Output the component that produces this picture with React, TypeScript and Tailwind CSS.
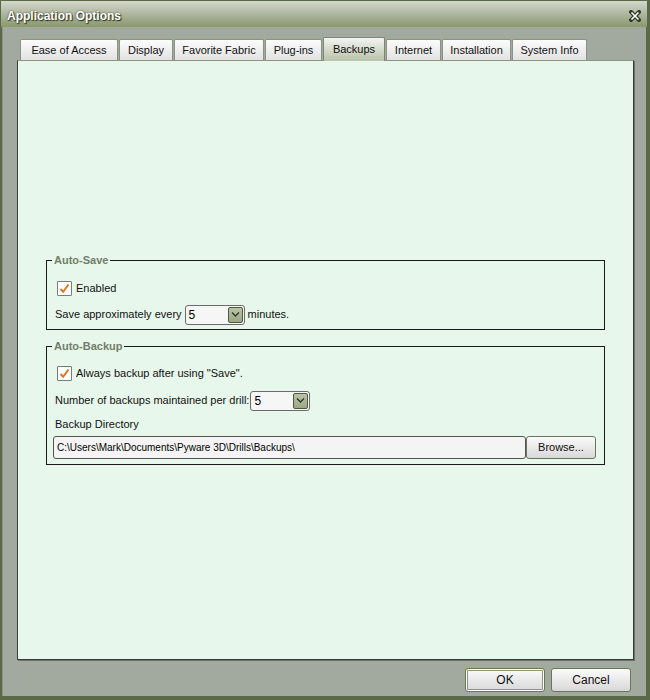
import React from "react";

const font = { fontFamily: '"Liberation Sans", Arial, sans-serif' };

function Tab({ label, w, selected }: { label: string; w: number; selected?: boolean }) {
  if (selected) {
    return (
      <div
        className="h-[24px] -mb-[1px] flex items-start justify-center pt-[3px] border border-b-0 border-[#7d8673] rounded-t-[2px] bg-gradient-to-b from-[#f4f4f2] to-[#b8c2a8] text-[11px] text-[#111] z-10"
        style={{ width: w }}
      >
        {label}
      </div>
    );
  }
  return (
    <div
      className="h-[21px] flex items-center justify-center border border-b-0 border-[#8a9282] rounded-t-[2px] bg-gradient-to-b from-[#fcfcfc] to-[#e2e2e2] text-[11px] text-[#111]"
      style={{ width: w }}
    >
      {label}
    </div>
  );
}

function Check() {
  return (
    <div className="w-[15px] h-[15px] border border-[#7a7a7a] bg-white rounded-[1px] flex items-center justify-center">
      <svg width="11" height="11" viewBox="0 0 11 11">
        <path d="M1.5 6 L4.2 8.8 L9.5 1.5" fill="none" stroke="#e2741c" strokeWidth="2" />
      </svg>
    </div>
  );
}

function Drop({ value }: { value: string }) {
  return (
    <div className="w-[60px] h-[20px] border border-[#6b6b6b] rounded-[3px] bg-[#f6f6f6] flex items-center justify-between pl-[3px] pr-[1px]">
      <span className="text-[12px] text-black">{value}</span>
      <div className="w-[15px] h-[16px] border border-[#4d5a3e] rounded-[2px] bg-gradient-to-b from-[#b9c3a6] to-[#9ba888] flex items-center justify-center">
        <svg width="9" height="7" viewBox="0 0 9 7">
          <path d="M1 1.5 L4.5 5 L8 1.5" fill="none" stroke="#2e3a24" strokeWidth="1.4" />
        </svg>
      </div>
    </div>
  );
}

function Button({ label, def }: { label: string; def?: boolean }) {
  return (
    <div
      className={
        "w-[80px] h-[24px] rounded-[3px] border border-[#6a7658] flex items-center justify-center text-[12px] text-[#111] bg-gradient-to-b from-[#fbfbfb] to-[#d8d8d8] " +
        (def ? "shadow-[inset_0_0_0_1px_#ffffff,inset_0_0_0_2px_#8c967e]" : "")
      }
    >
      {label}
    </div>
  );
}

function Group({ title, children, h }: { title: string; children: React.ReactNode; h: number }) {
  return (
    <div className="relative border border-[#1a1a1a]" style={{ height: h }}>
      <span className="absolute -top-[8px] left-[5px] px-[2px] bg-[#e8f7eb] text-[11px] font-bold text-[#727d68] leading-[14px]">
        {title}
      </span>
      {children}
    </div>
  );
}

export default function App() {
  return (
    <div style={font} className="w-[650px] h-[700px] bg-[#5a6a48] flex flex-col pl-[2px] pr-[4px] pb-[4px] pt-[1px]">
      {/* Title bar */}
      <div className="h-[26px] flex items-center justify-between bg-gradient-to-b from-[#d4d8cd] via-[#aeb69f] to-[#8a986c] pl-[6px] pr-[6px] -ml-[1px] -mr-[1px]">
        <span className="text-[12px] font-bold text-white pt-[3px] [text-shadow:1px_1px_1px_#2b3320,0_0_2px_#3a4430]">
          Application Options
        </span>
        <svg width="12" height="12" viewBox="0 0 12 12" className="mt-[3px]">
          <path d="M2 2 L10 10 M10 2 L2 10" stroke="#2f3a28" strokeWidth="4" strokeLinecap="square" />
          <path d="M2.5 2.5 L9.5 9.5 M9.5 2.5 L2.5 9.5" stroke="#ffffff" strokeWidth="1.6" />
        </svg>
      </div>
      {/* Body */}
      <div className="flex-1 bg-[#a2aa9f] flex flex-col pl-[14px] pr-[10px] pt-[12px] border-l border-[#8a9583]">
        <div className="flex items-end pl-[3px] gap-[1px] h-[21px]">
          <Tab label="Ease of Access" w={98} />
          <Tab label="Display" w={54} />
          <Tab label="Favorite Fabric" w={90} />
          <Tab label="Plug-ins" w={57} />
          <Tab label="Backups" w={62} selected />
          <Tab label="Internet" w={55} />
          <Tab label="Installation" w={69} />
          <Tab label="System Info" w={75} />
        </div>
        <div className="w-[617px] h-[600px] bg-[#e8f7eb] border border-[#8c9484] border-l-[#3c3c3c] border-b-[#3c3c3c] border-r-[#3c3c3c] shadow-[1px_1px_0_#6b7266] pl-[28px] pr-[28px] pt-[199px] flex flex-col text-[11px] text-[#111]">
          <Group title="Auto-Save" h={70}>
            <div className="flex items-center gap-[4px] pl-[10px] pt-[19px]">
              <Check />
              <span>Enabled</span>
            </div>
            <div className="flex items-center gap-[3px] pl-[8px] pt-[8px]">
              <span>Save approximately every</span>
              <Drop value="5" />
              <span>minutes.</span>
            </div>
          </Group>
          <div className="h-[16px]" />
          <Group title="Auto-Backup" h={119}>
            <div className="flex items-center gap-[4px] pl-[10px] pt-[18px]">
              <Check />
              <span>Always backup after using "Save".</span>
            </div>
            <div className="flex items-center gap-[1px] pl-[8px] pt-[9px]">
              <span>Number of backups maintained per drill:</span>
              <Drop value="5" />
            </div>
            <div className="pl-[8px] pt-[5px] h-[18px]">Backup Directory</div>
            <div className="flex items-center pl-[6px] pt-[7px]">
              <div className="w-[473px] h-[23px] border border-[#555] rounded-[3px] bg-[#f4f4f4] flex items-center pl-[3px] text-[10px] text-black">
                C:\Users\Mark\Documents\Pyware 3D\Drills\Backups\
              </div>
              <div className="w-[70px] h-[23px] rounded-[3px] border border-[#6a7658] flex items-center justify-center text-[11px] text-[#111] bg-gradient-to-b from-[#fafafa] to-[#d9d9d9]">
                Browse...
              </div>
            </div>
          </Group>
        </div>
        <div className="flex justify-end gap-[6px] pt-[8px] pr-[5px]">
          <Button label="OK" def />
          <Button label="Cancel" />
        </div>
      </div>
    </div>
  );
}
